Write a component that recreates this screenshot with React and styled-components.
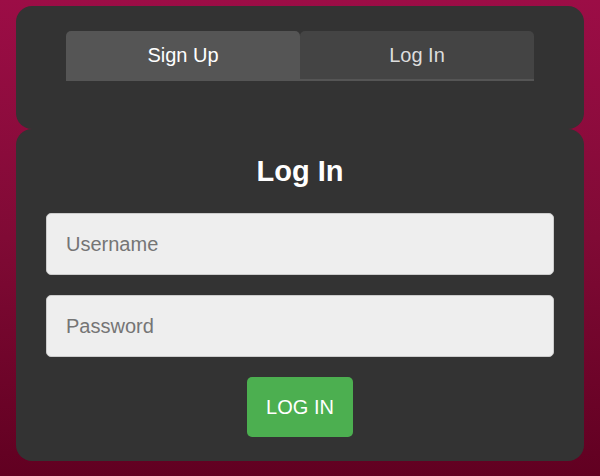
import React from "react";
import styled, { createGlobalStyle } from "styled-components";

const Global = createGlobalStyle`
  html, body { margin: 0; padding: 0; }
  body {
    font-family: "Liberation Sans", Arial, sans-serif;
    background: linear-gradient(180deg, #9c0d46 0%, #800a35 50%, #610021 100%);
    min-height: 476px;
  }
  * { box-sizing: border-box; }
`;

const Page = styled.div`
  width: 600px;
  height: 476px;
  padding: 6px 16px 15px;
  display: flex;
  flex-direction: column;
`;

const Card = styled.div`
  background: #333333;
  border-radius: 16px;
`;

const TabCard = styled(Card)`
  height: 125px;
  padding: 25px 50px 0;
`;

const Tabs = styled.div`
  display: flex;
  height: 50px;
`;

const Tab = styled.button`
  flex: 1;
  border: none;
  margin: 0;
  font-family: inherit;
  font-size: 20px;
  border-radius: 5px 5px 0 0;
  background: ${(p) => (p.$active ? "#555555" : "#444444")};
  color: ${(p) => (p.$active ? "#ffffff" : "#dddddd")};
  border-bottom: ${(p) => (p.$active ? "none" : "2px solid #555555")};
  padding: 0 0 ${(p) => (p.$active ? "2px" : "0")};
  cursor: pointer;
`;

const FormCard = styled(Card)`
  flex: 1;
  padding: 26px 30px 24px;
  display: flex;
  flex-direction: column;
  align-items: stretch;
`;

const Title = styled.h2`
  margin: 0 0 25px;
  text-align: center;
  color: #ffffff;
  font-size: 29px;
  font-weight: bold;
  line-height: 33px;
`;

const Input = styled.input`
  height: 62px;
  margin: 0 0 20px;
  padding: 0 19px;
  background: #eeeeee;
  border: 1px solid #cccccc;
  border-radius: 5px;
  font-family: inherit;
  font-size: 20px;
  color: #333;
  outline: none;
  &::placeholder { color: #757575; }
`;

const Submit = styled.button`
  align-self: center;
  height: 60px;
  padding: 0 19px;
  border: none;
  border-radius: 5px;
  background: #4caf50;
  color: #ffffff;
  font-family: inherit;
  font-size: 20px;
  cursor: pointer;
`;

export default function App() {
  return (
    <>
      <Global />
      <Page>
        <TabCard>
          <Tabs>
            <Tab $active>Sign Up</Tab>
            <Tab>Log In</Tab>
          </Tabs>
        </TabCard>
        <FormCard>
          <Title>Log In</Title>
          <Input placeholder="Username" />
          <Input type="password" placeholder="Password" />
          <Submit>LOG IN</Submit>
        </FormCard>
      </Page>
    </>
  );
}
